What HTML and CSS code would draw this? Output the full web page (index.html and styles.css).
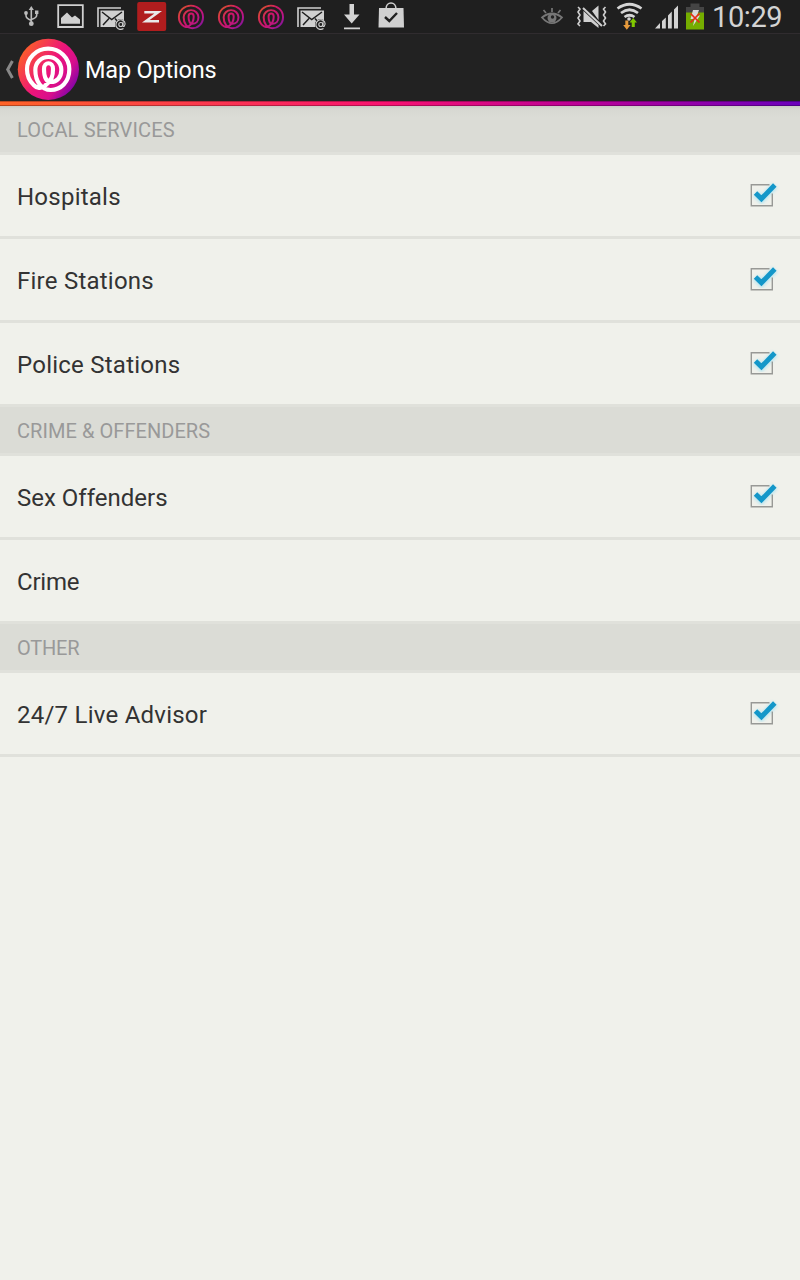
FILE: index.html
```html
<!DOCTYPE html>
<html lang="en">
<head>
<meta charset="utf-8">
<title>Map Options</title>
<link rel="stylesheet" href="styles.css">
</head>
<body>
<svg class="defs" width="0" height="0">
  <defs>
    <linearGradient id="brand" x1="0" y1="0.15" x2="1" y2="0.85">
      <stop offset="0" stop-color="#ff6a1c"/><stop offset=".5" stop-color="#ec147a"/><stop offset=".72" stop-color="#d80f8c"/><stop offset="1" stop-color="#6400b4"/>
    </linearGradient>
    <linearGradient id="line" gradientUnits="userSpaceOnUse" x1="80" y1="50" x2="210" y2="165">
      <stop offset="0" stop-color="#dc5a25"/><stop offset=".45" stop-color="#cc1469"/><stop offset=".7" stop-color="#bd1682"/><stop offset="1" stop-color="#6d14a5"/>
    </linearGradient>
    <filter id="soft" x="-30%" y="-30%" width="160%" height="160%"><feGaussianBlur stdDeviation="1.5"/></filter>
    <path id="spiral" d="M134 156C124 165 110 163 101 153C88 141 81 124 81 106A63.500 62 0 0 1 208 106C208 145 182 168 152 168C124 168 106 142 106 108A39 39 0 0 1 184 108C184 130 171 144 152 144C138 143 132 127 132 105C132 82 159 82 159 105C159 124 157 138 134 156"/>
    <symbol id="mail" viewBox="0 0 30 24">
      <path d="M1 20V1H24" fill="none" stroke="#d0d0d0" stroke-width="1.6"/>
      <path d="M3.500 3.500H27V20H3.500Z" fill="#d0d0d0"/>
      <path d="M5 5L14.700 12.500L25 5M6 18L12 11.500M18 11.500L21 15" fill="none" stroke="#1f1f1f" stroke-width="1.500"/>
      <circle cx="23.500" cy="17.500" r="5.500" fill="#1f1f1f"/>
      <path d="M26 14.500V18.500Q26 20 27.300 19.200Q28.800 17 27.600 14.800A4.800 4.800 0 1 0 26.500 21.500" fill="none" stroke="#d0d0d0" stroke-width="1.100"/><circle cx="23.800" cy="17.500" r="2" fill="none" stroke="#d0d0d0" stroke-width="1.100"/>
    </symbol>
    <symbol id="check" viewBox="0 0 34 34">
      <path d="M8.500 16.500L14.500 22.500L28 8.500" fill="none" stroke="#8adcf4" stroke-width="7.500" opacity=".5" filter="url(#soft)"/>
      <path d="M22.500 7.800H4.300V28.700H25.300V16.500" fill="none" stroke="#989996" stroke-width="1.400"/>
      <path d="M8.500 16L14.400 21.800L27.800 8" fill="none" stroke="#1497c9" stroke-width="4.900"/>
    </symbol>
  </defs>
</svg>

<div class="status">
  <div class="notifications">
    <svg viewBox="0 0 40 34"><g fill="none" stroke="#bcbcbc" stroke-width="1.600"><path d="M11.300 9V24M6 12V15.500Q6 18.500 11.300 20.500M16.700 12V15Q16.700 18 11.300 19.500"/></g><g fill="#bcbcbc"><path d="M8.700 10L11.300 6L13.900 10ZM15 10.500H18.400V14H15Z"/><circle cx="6" cy="13" r="1.900"/><circle cx="11.300" cy="23.700" r="2.400"/></g></svg>
    <svg viewBox="20 0 40 34"><path d="M18.200 5.200H42.800V27H18.200Z" fill="none" stroke="#d0d0d0" stroke-width="1.800"/><path d="M21 23.700V18L27 12.500L32 17.500L35 15.500L40 19.500V23.700Z" fill="#d0d0d0"/></svg>
    <svg viewBox="10 0 40 34"><use href="#mail" x="7" y="7" width="30" height="24"/></svg>
    <svg viewBox="10 0 40 34"><rect x="7.200" y="2" width="29" height="29" rx="2" fill="#b01d1e"/><path d="M14.300 12.200H28.200L15.800 21.300H29" fill="none" stroke="#e9e9e9" stroke-width="2.500"/></svg>
    <svg viewBox="20 0 40 34"><use href="#spiral" class="mini" transform="translate(3.500 -2.400) scale(.19 .182)"/></svg>
    <svg viewBox="20 0 40 34"><use href="#spiral" class="mini" transform="translate(3.500 -2.400) scale(.19 .182)"/></svg>
    <svg viewBox="20 0 40 34"><use href="#spiral" class="mini" transform="translate(3.500 -2.400) scale(.19 .182)"/></svg>
    <svg viewBox="10 0 40 34"><use href="#mail" x="7" y="7" width="30" height="24"/></svg>
    <svg viewBox="0 0 40 34"><path d="M9.500 4H14V14.500H19.500L11.700 23.500L4 14.500H9.500Z M4 27.500H20V29.300H4Z" fill="#d3d3d3"/></svg>
    <svg viewBox="0 0 40 34"><path d="M-1 8H23.500L24 27.500H-1.500Z" fill="#d0d0d0"/><path d="M6 9C6 1 16 1 16 9" fill="none" stroke="#d0d0d0" stroke-width="1.600"/><path d="M5 17L9.300 21L17 13" fill="none" stroke="#202020" stroke-width="2.400"/></svg>
  </div>
  <div class="system">
    <svg class="sys" viewBox="536 0 172 34">
      <g fill="none" stroke="#777" stroke-width="1.700"><path d="M542 17.500Q552 9.500 562 17.500Q552 29 542 17.500Z"/><path d="M552 12V8M546 13L543.500 10M558 13L560.500 10"/></g><circle cx="552" cy="18" r="4.500" fill="#777"/><circle cx="552.500" cy="17" r="1.700" fill="#222"/>
      <path d="M592 11L598.500 5.500V20ZM583.500 11V22H591L598.500 28V25L582.500 10Z" fill="#d0d0d0"/>
      <g fill="none" stroke="#d0d0d0"><path stroke-width="2" d="M583 8L602 26"/><path stroke-width="1.600" d="M578 7l2 2-2 3 2 3-2 3 2 3-2 3 2 2M605.500 7l-2 2 2 3-2 3 2 3-2 3 2 3-2 2"/></g>
      <g fill="none" stroke="#d5d5d5" stroke-width="2.700"><path d="M617.500 8.500Q629.500 0 641.500 8.500M621 13Q629.500 6.500 638 13M624.500 17Q629.500 13.500 634.500 17"/></g><circle cx="629" cy="19" r="1.800" fill="#d5d5d5"/>
      <path d="M625.300 20.500H628.300V25H630.500L626.800 29.800L623.200 25H625.300Z" fill="#e69a3c"/><path d="M631.700 27V22.500H629.500L633.200 18L637 22.500H634.800V27Z" fill="#80c800"/>
      <path d="M655 28.500L660 23V28.500ZM662 21L665.800 17.500V28.500H662ZM668 15.500L671.800 11.500V28.500H668ZM674 9.500L678 5.500V28.500H674Z" fill="#d3d3d3"/>
      <path d="M690.500 3.500H699.500V7H704V13H686V7H690.500Z" fill="#454545"/><path d="M686 12.500H704V29.500H686Z" fill="#75ad00"/><path d="M693 10H699L697 15.500H700L693 26L694.500 19H690.500Z" fill="#d9d9d9"/><path d="M690.500 13.500L699.500 22.500M699.500 13.500L690.500 22.500" stroke="#e62c16" stroke-width="1.700"/>
    </svg>
    <time class="clock">10:29</time>
  </div>
</div>

<header class="bar">
  <svg class="brand" viewBox="0 0 85 67"><path d="M13.200 27L8.500 35.500L13.200 44" transform="translate(-.8)" fill="none" stroke="#888" stroke-width="3"/><circle cx="48.400" cy="35.300" r="30.600" fill="url(#brand)"/><use href="#spiral" transform="scale(.33333)" fill="none" stroke="#fff" stroke-width="12.500"/></svg>
  <h1 class="title">Map Options</h1>
</header>
<div class="stripe"></div>

<main>
  <h2 class="section first"><span class="local">LOCAL SERVICES</span></h2>
  <div class="row"><span>Hospitals</span><svg class="box"><use href="#check"/></svg></div>
  <div class="row"><span>Fire Stations</span><svg class="box"><use href="#check"/></svg></div>
  <div class="row"><span>Police Stations</span><svg class="box"><use href="#check"/></svg></div>
  <h2 class="section"><span class="crime">CRIME &amp; OFFENDERS</span></h2>
  <div class="row"><span class="offenders">Sex Offenders</span><svg class="box"><use href="#check"/></svg></div>
  <div class="row"><span class="tight">Crime</span></div>
  <h2 class="section"><span class="tight">OTHER</span></h2>
  <div class="row"><span>24/7 Live Advisor</span><svg class="box"><use href="#check"/></svg></div>
</main>
</body>
</html>
```
FILE: styles.css
```css
* { box-sizing: border-box; }
body { margin: 0; width: 800px; min-height: 1280px; background: #f0f1eb; color: #333; font-family: Roboto, "Noto Sans", sans-serif; }
.defs { position: absolute; }
svg { display: block; flex: none; }
.status { height: 34px; display: flex; justify-content: space-between; background: #1f1f1f; border-bottom: 1px solid #302c2f; overflow: hidden; }
.notifications { display: flex; padding-left: 20px; }
.notifications svg { width: 40px; height: 34px; overflow: visible; }
.mini { fill: none; stroke: url(#line); stroke-width: 10.500; }
.system { display: flex; width: 264px; }
.sys { width: 172px; height: 34px; }
.clock { font-size: 29px; letter-spacing: -.4px; line-height: 34px; color: #d3d3d3; margin-left: 4px; white-space: nowrap; }
.bar { height: 67px; display: flex; align-items: center; background: #222; }
.brand { width: 85px; height: 67px; }
.title { margin: 4px 0 0; font-size: 23.500px; letter-spacing: -.2px; line-height: 32px; font-weight: 400; color: #fff; }
.stripe { height: 5px; background: linear-gradient(90deg, #ff6428, #f91371 48%, #ba0098 73%, #6b00bc); border-top: 1px solid #0004; border-bottom: 1px solid #0004; }
.section { margin: 0; height: 49px; padding: 3px 17px 2px; display: flex; align-items: center; background: #dbdcd6; border-bottom: 3px solid #e0e1db; font-size: 20px; line-height: 24px; font-weight: 400; color: #999; }
.first { background: linear-gradient(#ccccc6, #d7d8d2 3px, #dbdcd6 12px); }
.row { height: 84px; padding: 0 19px 0 17px; display: flex; align-items: center; justify-content: space-between; border-bottom: 3px solid #e0e1db; font-size: 24px; line-height: 32px; letter-spacing: .24px; white-space: nowrap; }
.row span { padding-top: 2px; }
.local { letter-spacing: .16px; }
.crime { letter-spacing: .06px; }
.row .offenders { letter-spacing: 0; }
.section .tight, .row .tight { letter-spacing: -.2px; }
.box { width: 34px; height: 34px; margin-bottom: 3px; }
```
